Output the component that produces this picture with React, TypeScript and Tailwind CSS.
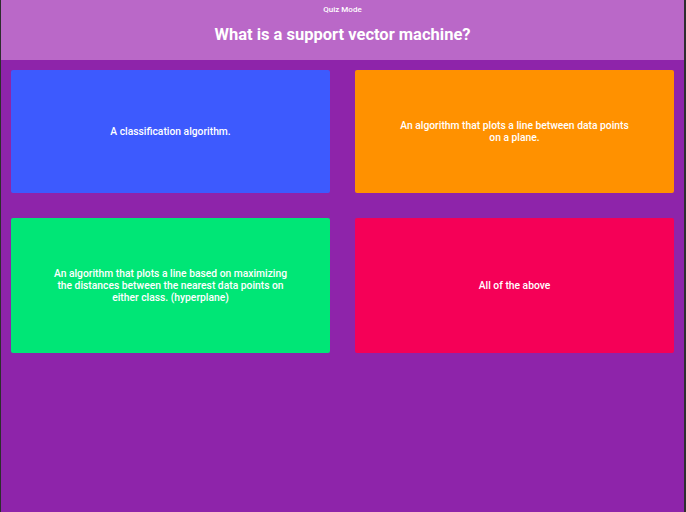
import React from "react";

const ANSWERS = [
  { text: "A classification algorithm.", color: "bg-[#3d5afe]" },
  { text: "An algorithm that plots a line between data points on a plane.", color: "bg-[#ff9100]" },
  {
    text: "An algorithm that plots a line based on maximizing the distances between the nearest data points on either class. (hyperplane)",
    color: "bg-[#00e676]",
  },
  { text: "All of the above", color: "bg-[#f50057]" },
];

export default function App() {
  return (
    <div
      className="flex min-h-[512px] flex-col border-l border-r-2 border-[#2e2e2e] bg-[#8e24aa] text-white"
      style={{ fontFamily: "Roboto, 'Liberation Sans', sans-serif" }}
    >
      <header className="flex h-[60px] flex-col items-center bg-[#ba68c8] pt-[5px]">
        <div className="text-[8px] font-medium leading-[10px]">Quiz Mode</div>
        <h1 className="mt-[10px] text-[16.5px] font-bold leading-[20px]">What is a support vector machine?</h1>
      </header>
      <main className="grid grid-cols-2 gap-[25px] px-[10px] pt-[10px]">
        {ANSWERS.map((a) => (
          <button
            key={a.text}
            type="button"
            className={`${a.color} flex items-center justify-center rounded-[2px] px-[40px] pt-[50px] pb-[49px] text-center text-[10.3px] font-medium leading-[12px]`}
          >
            {a.text}
          </button>
        ))}
      </main>
    </div>
  );
}
